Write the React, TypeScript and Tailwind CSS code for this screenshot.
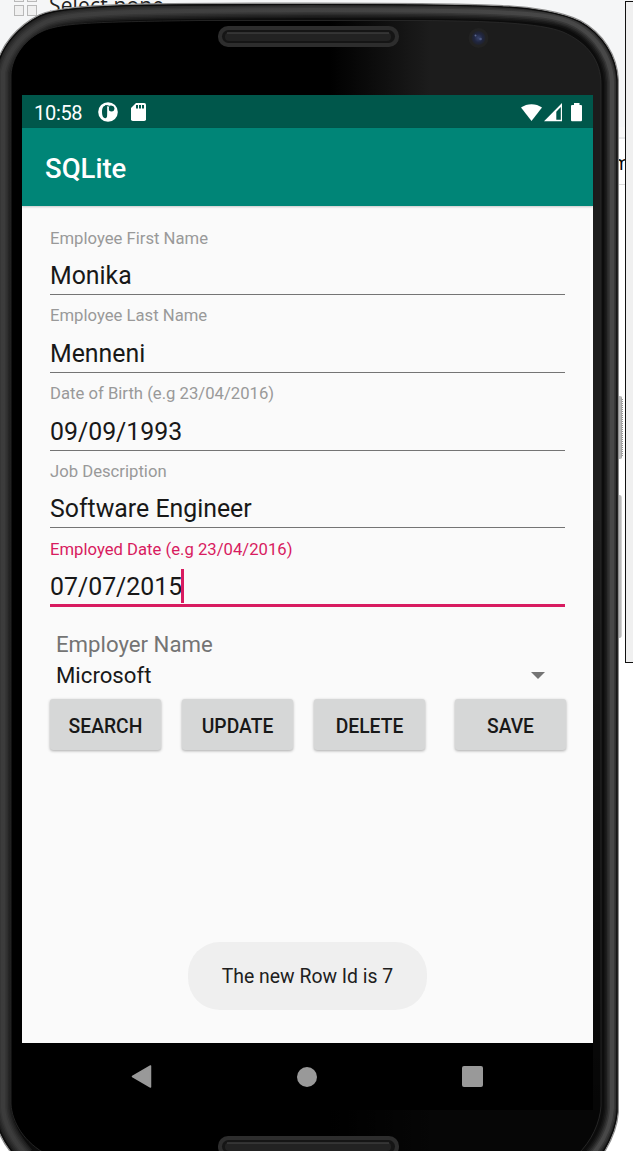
import React from "react";

function Desktop() {
  return (
    <div className="absolute inset-0 overflow-hidden bg-white">
      <div className="h-[127px] bg-[#f5f6f7]" />
      <div className="h-[12px] border-b-2 border-[#e8e9ea] bg-[#f8f8f8]" />
      <div className="h-[46px] border-b border-[#dcdcdc] bg-white" />
      <div className="absolute left-[14px] top-[-9px] grid grid-cols-2 gap-[3px]">
        {[0, 1, 2, 3].map((i) => (
          <span key={i} className="h-[11px] w-[10px] border border-[#b9b9b9] bg-[#f0f0f0]" />
        ))}
      </div>
      <div className="absolute left-[49px] top-[-8px] whitespace-nowrap font-['Open_Sans',sans-serif] text-[21px] leading-[26px] tracking-[0.15px] text-[#222]">
        Select none
      </div>
      <div className="absolute left-[612px] top-[151px] font-['Open_Sans',sans-serif] text-[20px] leading-[24px] text-black">
        m
      </div>
      <div className="absolute left-[625px] top-[1px] h-[662px] w-[20px] border border-[#111] bg-[#f0f0f0]" />
    </div>
  );
}

const outer =
  "M-3 68C2 46 18 27 40 16C56 9 90 7 133 5.5C190 4.5 250 4.5 308 4.5S470 5 503 7C530 8 562 13 580 22C602 34 616 56 617 80V1112C616 1126 610 1141 601 1155H15C7 1146 0 1134 -3 1122Z";
const inner =
  "M11 75C12 55 27 38 43 31C62 23 90 22 200 20.5H420C490 21 540 23 563 32C588 43 601 61 601 84V1106C600 1122 592 1141 577 1155H48C24 1143 12 1122 11 1104Z";
const ridge =
  "M26 1155C12 1139 4 1124 3 1107V72C8 50 24 32 46 22C66 13 110 11 308 10C470 10 530 12 556 18C590 25 611 54 612 82V1108C611 1124 604 1141 592 1155";

const ridgeLayers = [
  { id: "r0", left: "#1d1d1d", right: "#131313", width: 16 },
  { id: "r1", left: "#262626", right: "#1d1d1d", width: 13 },
  { id: "r2", left: "#2e2e2e", right: "#2a2a2a", width: 10 },
  { id: "r3", left: "#363636", right: "#383838", width: 7 },
  { id: "r4", left: "#3c3c3c", right: "#484848", width: 4 },
];

function PhoneBody() {
  return (
    <svg className="absolute inset-0" width="633" height="1151" viewBox="0 0 633 1151" fill="none">
      <defs>
        <clipPath id="shell">
          <path d={outer} />
        </clipPath>
        {ridgeLayers.map((l) => (
          <linearGradient key={l.id} id={l.id} x1="0" y1="0" x2="612" y2="0" gradientUnits="userSpaceOnUse">
            <stop offset="0" stopColor={l.left} />
            <stop offset="1" stopColor={l.right} />
          </linearGradient>
        ))}
        <linearGradient id="face" x1="330" y1="0" x2="430" y2="0" gradientUnits="userSpaceOnUse">
          <stop offset="0" stopColor="#000" />
          <stop offset="1" stopColor="#1c1c1c" />
        </linearGradient>
        <linearGradient id="fade" x1="0" y1="500" x2="0" y2="1110" gradientUnits="userSpaceOnUse">
          <stop offset="0" stopColor="#000" stopOpacity="0" />
          <stop offset="1" stopColor="#000" stopOpacity="0.8" />
        </linearGradient>
        <linearGradient id="key" x1="617" y1="0" x2="623" y2="0" gradientUnits="userSpaceOnUse">
          <stop offset="0" stopColor="#777" />
          <stop offset="0.5" stopColor="#c4c4c4" />
          <stop offset="1" stopColor="#858585" />
        </linearGradient>
        <radialGradient id="lens">
          <stop offset="0" stopColor="#38436b" />
          <stop offset="0.6" stopColor="#202640" />
          <stop offset="1" stopColor="#20222b" />
        </radialGradient>
      </defs>
      <path d="M618.5 370V396" stroke="#666" />
      <rect x="617" y="396" width="5" height="63" rx="2" fill="url(#key)" />
      <path d="M622.5 399V456" stroke="#999" strokeDasharray="1 1" />
      <rect x="617" y="495" width="4.5" height="143" rx="2" fill="url(#key)" />
      <path d={outer} stroke="#8e8e8e" strokeWidth="4" />
      <path d={outer} fill="#0c0c0c" stroke="#0c0c0c" />
      <g clipPath="url(#shell)">
        {ridgeLayers.map((l) => (
          <path key={l.id} d={ridge} stroke={`url(#${l.id})`} strokeWidth={l.width} />
        ))}
      </g>
      <path d={outer} stroke="#0c0c0c" strokeWidth="1.2" />
      <path d={inner} fill="url(#face)" />
      <path d={inner} fill="url(#fade)" clipPath="inset(500px 0 0 320px)" />
      <path d={inner} stroke="#2b2b2b" strokeWidth="0.8" />
      <rect x="22" y="1043" width="571" height="67" fill="#000" />
      {[26, 1136].map((y) => (
        <g key={y}>
          <rect x="218" y={y} width="181" height="21" rx="10" fill="#2d2d2d" />
          <rect x="222" y={y + 4} width="173" height="13" rx="6.5" fill="#151515" />
          <rect x="225" y={y + 6.5} width="166" height="8.5" rx="4" fill="#222" />
          <path d={`M227 ${y + 7}H389`} stroke="#484848" />
        </g>
      ))}
      <circle cx="478.5" cy="38" r="10" fill="#222" />
      <circle cx="478.5" cy="38" r="7" fill="url(#lens)" />
      <circle cx="475.5" cy="35.5" r="1" fill="#5a678f" />
      <circle cx="480.5" cy="39" r="1.3" fill="#4d5880" />
    </svg>
  );
}

function StatusBar() {
  return (
    <div className="flex h-[33px] items-center bg-[#00574b] pl-[12px] pr-[10px] pt-px text-white">
      <span className="w-[64px] pt-px text-[20px] leading-none tracking-[-0.3px]">10:58</span>
      <svg width="20" height="20" viewBox="0 0 20 20">
        <circle cx="10" cy="10" r="9.8" fill="#fff" />
        <path d="M9.5 3.6C6 3 4 5 4 9.8s1.7 6.6 3.4 6.4S9.5 14 9.5 10Z" fill="#00574b" />
        <circle cx="13.5" cy="6.6" r="2.9" fill="#00574b" />
        <path d="M10 4V16.5" stroke="#fff" strokeWidth="1.3" />
        <path d="M7 3.9Q9 3.2 10 3.9T13.4 4" stroke="#00574b" strokeWidth="1" fill="none" />
      </svg>
      <svg className="ml-[13px]" width="15" height="18" viewBox="0 0 15 18">
        <path d="M5 0H13.2Q15 0 15 1.8V16.2Q15 18 13.2 18H1.8Q0 18 0 16.2V5Z" fill="#fff" />
        <path d="M5 2H7V5.4H5ZM8 2H10V5.4H8ZM11 2H13V5.4H11Z" fill="#00574b" />
      </svg>
      <svg className="ml-auto" width="62" height="19" viewBox="0 0 62 19" fill="#fff">
        <path d="M0 4.6C6 0 15 0 21 4.6L10.5 18Z" />
        <path d="M41 0V18.3H23ZM39.8 4L35.3 8.7V16.7H39.8Z" fillRule="evenodd" />
        <path d="M53 0H58.5V2H60Q61 2 61 3V17Q61 18.3 60 18.3H51Q50 18.3 50 17V3Q50 2 51 2H53Z" />
      </svg>
    </div>
  );
}

const fields = [
  { label: "Employee First Name", value: "Monika" },
  { label: "Employee Last Name", value: "Menneni" },
  { label: "Date of Birth (e.g 23/04/2016)", value: "09/09/1993" },
  { label: "Job Description", value: "Software Engineer" },
  { label: "Employed Date (e.g 23/04/2016)", value: "07/07/2015", active: true },
];

function Field({ label, value, active }: { label: string; value: string; active?: boolean }) {
  return (
    <div className="h-[77.75px]">
      <div className={`h-[21px] pt-[0.5px] text-[16.68px] leading-[20px] ${active ? "text-[#d81b60]" : "text-[#999]"}`}>
        {label}
      </div>
      <div
        className={`flex h-[46px] items-center border-b-[1.5px] pt-[9px] text-[24.85px] leading-[30px] text-[#181818] ${
          active ? "border-transparent" : "border-[#747474]"
        }`}
      >
        {value}
        {active && <span className="ml-[-1px] mt-[-2px] h-[34px] w-[2.5px] bg-[#d81b60]" />}
      </div>
      {active && <div className="mt-[-2px] h-[3px] bg-[#d81b60]" />}
    </div>
  );
}

function ActionButton({ children }: { children: React.ReactNode }) {
  return (
    <button className="h-[51px] w-[111px] rounded-[3px] bg-[#d6d7d7] pt-[5px] text-[19.3px] font-medium text-[#181818] shadow-[0_1px_3px_rgba(0,0,0,0.32)]">
      {children}
    </button>
  );
}

export default function App() {
  return (
    <div className="relative h-[1151px] w-[633px] overflow-hidden font-[Roboto,sans-serif]">
      <Desktop />
      <PhoneBody />
      <main className="relative ml-[22px] w-[571px] pt-[95px]">
        <StatusBar />
        <header className="relative z-10 flex h-[78px] items-center bg-[#008577] pl-[23px] pt-[3px] text-[27.5px] font-medium text-white shadow-[0_1px_2px_rgba(0,0,0,0.2)]">
          SQLite
        </header>
        <section className="flex h-[837px] flex-col bg-[#fafafa] px-[28px] pt-[22px]">
          {fields.map((f) => (
            <Field key={f.label} {...f} />
          ))}
          <div className="px-[6px] pt-[12px] text-[22.2px] leading-[30px]">
            <div className="text-[#747474]">Employer Name</div>
            <div className="mt-[1.5px] flex items-center justify-between pr-[14px] text-[#181818]">
              Microsoft
              <svg width="14" height="7" viewBox="0 0 14 7">
                <path d="M0 0H14L7 7Z" fill="#747474" />
              </svg>
            </div>
          </div>
          <div className="mt-[9px] flex">
            <div className="flex gap-[21px]">
              <ActionButton>SEARCH</ActionButton>
              <ActionButton>UPDATE</ActionButton>
              <ActionButton>DELETE</ActionButton>
            </div>
            <div className="ml-[30px]">
              <ActionButton>SAVE</ActionButton>
            </div>
          </div>
          <div className="mb-[33px] mt-auto flex h-[68px] w-[239px] items-center justify-center self-center rounded-[32px] bg-[#efefef] pt-[2px] text-[19.4px] text-[#202020]">
            The new Row Id is 7
          </div>
        </section>
        <nav className="flex h-[67px] items-center justify-between pl-[109px] pr-[110px]">
          <svg width="21" height="23" viewBox="0 0 21 23">
            <path d="M19.5 1V22L1.5 11.5Z" fill="#999" stroke="#999" strokeWidth="1.5" strokeLinejoin="round" />
          </svg>
          <span className="h-[20px] w-[20px] rounded-full bg-[#999]" />
          <span className="h-[21px] w-[21px] rounded-[2px] bg-[#999]" />
        </nav>
      </main>
    </div>
  );
}
